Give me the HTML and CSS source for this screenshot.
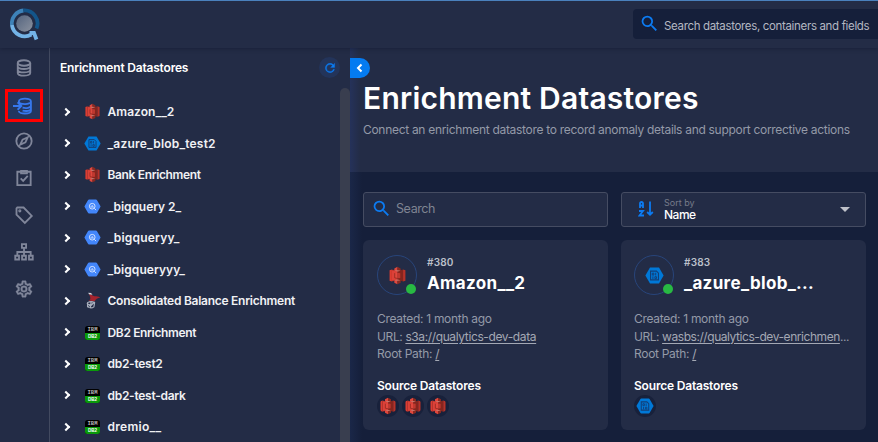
FILE: index.html
```html
<!DOCTYPE html>
<html lang="en">
<head>
<meta charset="utf-8">
<title>Enrichment Datastores</title>
<link rel="stylesheet" href="styles.css">
</head>
<body>
<svg class="defs" aria-hidden="true">
  <symbol id="search" viewBox="0 0 24 24"><path fill="currentColor" d="M9.5,3A6.5,6.5 0 0,1 16,9.5C16,11.11 15.41,12.59 14.44,13.73L14.71,14H15.5L20.5,19L19,20.5L14,15.5V14.71L13.73,14.44C12.59,15.41 11.11,16 9.5,16A6.5,6.5 0 0,1 3,9.5A6.5,6.5 0 0,1 9.5,3M9.5,5C7,5 5,7 5,9.5C5,12 7,14 9.5,14C12,14 14,12 14,9.5C14,7 12,5 9.5,5Z"/></symbol>
  <symbol id="s3" viewBox="0 0 24 24">
    <path fill="#dc3c31" d="M2 5.500l3-1v15l-3-1z"/><path fill="#a82a22" d="M5 4.500l7 2v11l-7 2z"/>
    <path fill="#dc4138" d="M5 5.500l7 1v11l-7 1z"/><path fill="#85251e" d="M12 6.500l7-2v15l-7-2z"/>
    <path fill="#b83228" d="M19 4.500l3 1v13l-3 1z"/>
    <path fill="#e0483e" d="M8 3l4-2v6l-4-1zM8 21l4 2v-6l-4 1zM8.500 9l3.500-.5v7l-3.500-.5z"/>
    <path fill="#8b281f" d="M16 3l-4-2v6l4-1zM16 21l-4 2v-6l4 1z"/><path fill="#c0382f" d="M15.500 9l-3.500-.5v7l3.500-.5z"/>
    <path fill="none" stroke="#8b281f" d="M8.500 9v6l3.500.7"/>
    <path fill="#c9776d" d="M8 6l4 1 4-1-4-.7zM8 18l4-1 4 1-4 .7z"/>
  </symbol>
  <symbol id="azure" viewBox="0 0 24 24"><path fill="#0078d7" d="M6.300 2h11.400L23.500 12l-5.800 10H6.300L.5 12z"/><path fill="none" stroke="#123f78" stroke-width="1.400" d="M7 6.500h7.500L17 9v8.500H7z"/><path fill="none" stroke="#123f78" stroke-width="1.200" d="M9.200 9h2v2.500h-2zM13.500 8.500v3.500M10 13v3.500M12.500 13.500h2v2.500h-2z"/></symbol>
  <symbol id="bigquery" viewBox="0 0 24 24"><path fill="#4386fa" d="M7 2h10q.8 0 1.200.7l4.900 8.500q.4.800 0 1.600l-4.900 8.500q-.4.700-1.200.7H7q-.8 0-1.200-.7L.9 12.800q-.4-.8 0-1.600l4.900-8.500Q6.200 2 7 2z"/><path fill="none" stroke="#d9e6ff" stroke-width="1.300" d="M15.600 11.600a4 4 0 1 1-8 0 4 4 0 0 1 8 0M14.500 14.500l2.600 2.600M10 11.500v2M11.600 10v3.500M13.200 12v1.500"/></symbol>
  <symbol id="mssql" viewBox="0 0 24 24"><path fill="#a4232d" d="M7 2c3 1 5 3 8 4 3 0 5 0 8 2-4 0-6 2-8 5l-9-1c3-1 3-2 3-4z"/><path fill="#d5d7de" d="M6 1l4 .5 2 2.500-5-1z"/><path fill="none" stroke="#a9afbd" stroke-width="1.600" d="M5 15q5-3 10 0l-1 6q-4 3-9 0zM4 16l6 3 5-5M10 14l-1 8M5 21l8-5"/></symbol>
</svg>

<header class="topbar">
  <svg class="logo" viewBox="0 0 32 34">
    <defs><linearGradient id="lens" x2="1" y2="1"><stop stop-color="#53637e"/><stop offset="1" stop-color="#8b929f"/></linearGradient></defs>
    <circle cx="15.500" cy="15.500" r="8.300" fill="url(#lens)"/>
    <g fill="none" stroke-width="3.800"><path stroke="#3e82b8" d="M2.900 17A13 13 0 0 1 14.500 2.500"/><path stroke="#13558a" d="M14.500 2.500A13 13 0 0 1 27.500 20.500"/><path stroke="#73b3e7" d="M2.900 17A13 13 0 0 0 22.300 26.500M20.500 25h4.500l2.500 6.500"/></g>
  </svg>
  <div class="global-search"><svg><use href="#search"/></svg><span>Search datastores, containers and fields</span></div>
</header>

<div class="app">
  <nav class="rail">
    <a><svg viewBox="0 0 24 24"><g class="line"><ellipse cx="12" cy="6" rx="7.500" ry="3.300"/><path d="M4.500 6v12c0 4.300 15 4.300 15 0V6M4.500 10c0 4.300 15 4.300 15 0M4.500 14c0 4.300 15 4.300 15 0"/></g></svg></a>
    <a class="active"><svg viewBox="0 0 24 24"><g class="line"><path d="M7 6.500c0-4.500 14.500-4.500 14.500 0s-14.500 4-14.500 0M21.500 6.500v11.500c0 4-14.500 4-14.500 0M21.500 11.500c0 3-6 3.500-10 2.500M21.500 15.500c0 2.500-6 3-10 2M0 12h10M5.500 7.500L10 12l-4.500 4.500"/></g></svg></a>
    <a><svg viewBox="0 0 24 24"><g class="line"><circle cx="12" cy="12" r="9.200"/><path d="M7.500 16.500l2.800-6.200 6.200-2.800-2.800 6.200z"/></g></svg></a>
    <a><svg viewBox="0 0 24 24"><g class="line"><path d="M4 4.500h16v16H4zM8 12.500l3 3 5.500-6"/><path d="M8.500 3.500h7v3h-7z"/></g></svg></a>
    <a><svg viewBox="0 0 24 24"><g class="line"><path d="M3 4v7.500l10 9.900 8.300-8.300L11.500 3H4z"/><circle cx="7" cy="7" r=".8"/></g></svg></a>
    <a><svg viewBox="0 0 24 24"><g class="line"><path d="M9.500 2.500h5V7h-5zM1.500 16.500H6V21H1.500zM9.700 16.500h4.600V21H9.700zM18 16.500h4.500V21H18zM12 7v9.500M4 16.500V12h16v4.500"/></g></svg></a>
    <a><svg viewBox="0 0 24 24"><path fill="currentColor" stroke="currentColor" stroke-width=".4" d="M12,8A4,4 0 0,1 16,12A4,4 0 0,1 12,16A4,4 0 0,1 8,12A4,4 0 0,1 12,8M12,10A2,2 0 0,0 10,12A2,2 0 0,0 12,14A2,2 0 0,0 14,12A2,2 0 0,0 12,10M10,22C9.75,22 9.54,21.82 9.5,21.58L9.13,18.93C8.5,18.68 7.96,18.34 7.44,17.94L4.95,18.95C4.73,19.03 4.46,18.95 4.34,18.73L2.34,15.27C2.21,15.05 2.27,14.78 2.46,14.63L4.57,12.97L4.5,12L4.57,11L2.46,9.37C2.27,9.22 2.21,8.95 2.34,8.73L4.34,5.27C4.46,5.05 4.73,4.96 4.95,5.05L7.44,6.05C7.96,5.66 8.5,5.32 9.13,5.07L9.5,2.42C9.54,2.18 9.75,2 10,2H14C14.25,2 14.46,2.18 14.5,2.42L14.87,5.07C15.5,5.32 16.04,5.66 16.56,6.05L19.05,5.05C19.27,4.96 19.54,5.05 19.66,5.27L21.66,8.73C21.79,8.95 21.73,9.22 21.54,9.37L19.43,11L19.5,12L19.43,13L21.54,14.63C21.73,14.78 21.79,15.05 21.66,15.27L19.66,18.73C19.54,18.95 19.27,19.04 19.05,18.95L16.56,17.95C16.04,18.34 15.5,18.68 14.87,18.93L14.5,21.58C14.46,21.82 14.25,22 14,22H10M11.25,4L10.88,6.61C9.68,6.86 8.62,7.5 7.85,8.39L5.44,7.35L4.69,8.65L6.8,10.2C6.4,11.37 6.4,12.64 6.8,13.8L4.68,15.36L5.43,16.66L7.86,15.62C8.63,16.5 9.68,17.14 10.87,17.38L11.24,20H12.76L13.13,17.39C14.32,17.14 15.37,16.5 16.14,15.62L18.57,16.66L19.32,15.36L17.2,13.81C17.6,12.64 17.6,11.37 17.2,10.2L19.31,8.65L18.56,7.35L16.15,8.39C15.38,7.5 14.32,6.86 13.12,6.62L12.75,4H11.25Z"/></svg></a>
  </nav>

  <aside class="tree">
    <div class="tree-head"><span>Enrichment Datastores</span>
      <button class="refresh"><svg viewBox="0 0 24 24"><path fill="currentColor" stroke="currentColor" stroke-width=".5" d="M17.65,6.35C16.2,4.9 14.21,4 12,4A8,8 0 0,0 4,12A8,8 0 0,0 12,20C15.73,20 18.84,17.45 19.73,14H17.65C16.83,16.33 14.61,18 12,18A6,6 0 0,1 6,12A6,6 0 0,1 12,6C13.66,6 15.14,6.69 16.22,7.78L13,11H20V4L17.65,6.35Z"/></svg></button>
    </div>
    <ul>
      <li><i></i><svg><use href="#s3"/></svg><span class="wide">Amazon__2</span></li>
      <li><i></i><svg><use href="#azure"/></svg><span class="wider">_azure_blob_test2</span></li>
      <li><i></i><svg><use href="#s3"/></svg><span class="tight">Bank Enrichment</span></li>
      <li><i></i><svg><use href="#bigquery"/></svg><span class="mid">_bigquery 2_</span></li>
      <li><i></i><svg><use href="#bigquery"/></svg><span class="wider">_bigqueryy_</span></li>
      <li><i></i><svg><use href="#bigquery"/></svg><span class="wide">_bigqueryyy_</span></li>
      <li><i></i><svg><use href="#mssql"/></svg><span class="snug">Consolidated Balance Enrichment</span></li>
      <li><i></i><div class="db2"><b>IBM</b><b>DB2</b></div><span class="tight">DB2 Enrichment</span></li>
      <li><i></i><div class="db2"><b>IBM</b><b>DB2</b></div><span>db2-test2</span></li>
      <li><i></i><div class="db2"><b>IBM</b><b>DB2</b></div><span>db2-test-dark</span></li>
      <li><i></i><div class="db2"><b>IBM</b><b>DB2</b></div><span class="widest">dremio__</span></li>
    </ul>
    <div class="scrollbar"></div>
  </aside>

  <main>
    <section class="hero">
      <button class="collapse"><svg viewBox="0 0 10 10"><path d="M6.500 1.500L3 5l3.500 3.500"/></svg></button>
      <h1>Enrichment Datastores</h1>
      <p>Connect an enrichment datastore to record anomaly details and support corrective actions</p>
    </section>
    <section class="grid">
      <div class="field"><svg class="mag"><use href="#search"/></svg><span class="placeholder">Search</span></div>
      <div class="field sort">
        <svg class="az" viewBox="0 0 16 18"><g class="line"><path d="M2 8V3.500Q2 2 3.500 2T5 3.500V8M2 5.500h3M1 11h4L1.500 15.500H6M12 1.500v13M9.200 12l2.800 2.800 2.800-2.800"/></g></svg>
        <div class="sort-text"><small>Sort by</small><span>Name</span></div><b class="caret"></b>
      </div>
      <article class="card">
        <div class="card-head"><div class="avatar"><svg><use href="#s3"/></svg><em></em></div><div class="names"><small>#380</small><h2>Amazon__2</h2></div></div>
        <div class="meta"><div>Created: 1 month ago</div><div class="url">URL: <u>s3a://qualytics-dev-data</u></div><div>Root Path: <u>/</u></div></div>
        <h3>Source Datastores</h3>
        <div class="sources"><svg viewBox="0 0 24 24"><use href="#s3"/></svg><svg viewBox="0 0 24 24"><use href="#s3"/></svg><svg viewBox="0 0 24 24"><use href="#s3"/></svg></div>
      </article>
      <article class="card">
        <div class="card-head"><div class="avatar"><svg><use href="#azure"/></svg><em></em></div><div class="names"><small>#383</small><h2>_azure_blob_...</h2></div></div>
        <div class="meta"><div>Created: 1 month ago</div><div class="url long">URL: <u>wasbs://qualytics-dev-enrichmen</u>...</div><div>Root Path: <u>/</u></div></div>
        <h3>Source Datastores</h3>
        <div class="sources"><svg viewBox="0 0 24 24"><use href="#azure"/></svg></div>
      </article>
    </section>
  </main>
</div>
</body>
</html>
```
FILE: styles.css
```css
* { box-sizing: border-box; }
body { margin: 0; width: 878px; height: 442px; overflow: hidden; background: #151f3a; color: #fff; font-family: Inter, "Open Sans", sans-serif; font-size: 12px; }
svg { display: block; flex: none; }
button { border: 0; padding: 0; }
h1, h2, h3, p, ul { margin: 0; padding: 0; }
.defs { position: absolute; width: 0; height: 0; }
.line { fill: none; stroke: currentColor; stroke-width: 2.2; }

.topbar { position: relative; height: 48px; display: flex; justify-content: space-between; background: #232c46; border-top: 1px solid #4a81bd; box-shadow: 0 1px 4px rgba(10, 15, 35, .35); z-index: 1; }
.logo { width: 32px; height: 34px; margin: 7px 0 0 9px; }
.global-search { width: 245px; height: 30px; margin-top: 8px; padding-left: 6px; display: flex; align-items: center; gap: 4px; background: #151f3a; border-radius: 4px 0 0 4px; color: #b4b8c2; font-size: 11.5px; letter-spacing: -.34px; white-space: nowrap; }
.global-search svg { width: 21px; height: 21px; color: #0c7bf2; margin-top: -2px; }
.global-search span { padding-top: 3px; }

.app { display: flex; height: 394px; }
.rail { width: 50px; flex: none; display: flex; flex-direction: column; gap: 1px; padding-top: 2px; background: #232c46; border-right: 1px solid #424a60; color: #80869a; }
.rail a { height: 36px; width: 48px; display: flex; align-items: center; justify-content: center; }
.rail svg { width: 20px; height: 20px; }
.rail .active { width: 38px; height: 33px; margin: 2px 0 0 5px; padding-right: 2px; border: 3px solid #f00; background: #23365f; color: #3677ee; }

.tree { width: 300px; flex: none; position: relative; background: #232c46; }
.tree-head { height: 39px; padding: 0 10px; display: flex; align-items: center; justify-content: space-between; font-weight: 600; font-size: 12px; letter-spacing: -.2px; }
.refresh { width: 21px; height: 21px; border-radius: 50%; display: flex; align-items: center; justify-content: center; background: #23345a; color: #0c7bf2; }
.refresh svg { width: 14px; height: 14px; }
.tree ul { list-style: none; padding-top: 9px; }
.tree li { height: 31.5px; display: flex; align-items: center; padding-left: 12.5px; font-weight: 600; font-size: 12px; letter-spacing: -.28px; color: #f0f1f4; white-space: nowrap; }
.tree li i { width: 6px; height: 6px; border: solid #fff; border-width: 2px 2px 0 0; transform: rotate(45deg); margin-right: 15.5px; }
.tree li svg { width: 17px; height: 17px; margin-right: 6.5px; }
.tree .widest { letter-spacing: .28px; }
.tree .wider { letter-spacing: .2px; }
.tree .wide { letter-spacing: .05px; }
.tree .mid { letter-spacing: -.06px; }
.tree .snug { letter-spacing: -.26px; }
.tree .tight { letter-spacing: -.35px; }
.db2 { width: 15px; height: 14px; margin: 1px 7.5px 0 1px; border-radius: 2.5px; overflow: hidden; display: grid; grid-template-rows: 7px 7px; background: #000; text-align: center; }
.db2 b { font: bold 5.5px/7px "Liberation Mono", monospace; letter-spacing: 0; color: #b5b5b5; }
.db2 b + b { background: #0a9a0a; font: bold 4.5px/7px "Liberation Sans", sans-serif; color: #fff; }
.scrollbar { position: absolute; right: 0; top: 40px; bottom: 0; width: 10px; border-radius: 5px 5px 0 0; background: #393e4f; }

main { flex: 1; min-width: 0; background: linear-gradient(90deg, #1a2748, #151f3a 12px); }
.hero { position: relative; height: 124px; padding: 33px 13px 0; background: linear-gradient(90deg, #25325a, #232c46 10px); }
.collapse { position: absolute; left: 0; top: 10px; width: 20px; height: 20px; border-radius: 0 10px 10px 0; background: #047bf1; display: flex; align-items: center; justify-content: center; }
.collapse svg { width: 10px; height: 10px; fill: none; stroke: #fff; stroke-width: 2; }
h1 { font-size: 30px; line-height: 34px; font-weight: 600; letter-spacing: .22px; white-space: nowrap; }
.hero p { margin-top: 7px; font-size: 12px; line-height: 16px; letter-spacing: -.3px; color: #949aa8; white-space: nowrap; }

.grid { padding: 20px 12px 0 13px; display: grid; grid-template-columns: 245px 245px; column-gap: 13px; row-gap: 13px; }
.field { height: 35px; border: 1px solid #454c62; border-radius: 3px; background: #232c46; display: flex; align-items: center; }
.mag { width: 21px; height: 21px; color: #0c7bf2; margin: -2px 4px 0 7px; }
.placeholder { color: #7f8492; font-size: 12.5px; letter-spacing: -.4px; margin-top: -3px; }
.az { width: 16px; height: 18px; color: #0c7bf2; margin: -1px 10px 0 16px; }
.az .line { stroke-width: 1.8; }
.sort-text { display: flex; flex-direction: column; width: 176px; }
.sort-text small { font-size: 9px; line-height: 11px; color: #767b89; }
.sort-text span { font-size: 12px; line-height: 14px; font-weight: 500; letter-spacing: -.5px; }
.caret { border: 5px solid transparent; border-top-color: #bfc2ca; border-bottom: 0; }
.card { height: 190px; padding: 15px 13px 0 14px; border-radius: 6px; background: #232c46; overflow: hidden; }
.card + .card { padding-left: 13px; }
.card-head { display: flex; gap: 10px; height: 56px; }
.avatar { position: relative; width: 40px; height: 40px; border: 1px solid #28457b; border-radius: 50%; display: flex; align-items: center; justify-content: center; }
.avatar svg { width: 19px; height: 19px; }
.avatar em { position: absolute; width: 10px; height: 10px; border-radius: 50%; right: 0; bottom: 0; background: #28b943; }
.names small { display: block; font-size: 10px; line-height: 14px; font-weight: 600; letter-spacing: .2px; color: #bcc0ca; }
h2 { font-size: 17px; line-height: 24px; font-weight: 700; margin-top: 2px; letter-spacing: .33px; white-space: nowrap; }
.meta { margin-top: -1px; font-size: 12px; line-height: 17.5px; letter-spacing: -.3px; color: #949aa8; white-space: nowrap; }
.meta .url { letter-spacing: -.38px; }
.meta .long { letter-spacing: -.44px; }
.meta u { color: #a3a8b4; text-underline-offset: 2px; text-decoration-thickness: 1px; }
h3 { margin-top: 15px; font-size: 12px; line-height: 16px; font-weight: 600; letter-spacing: -.19px; }
.sources { display: flex; gap: 3px; margin-top: 1px; }
.sources svg { width: 22px; height: 22px; padding: 2px; border-radius: 50%; background: #18213b; }
```
